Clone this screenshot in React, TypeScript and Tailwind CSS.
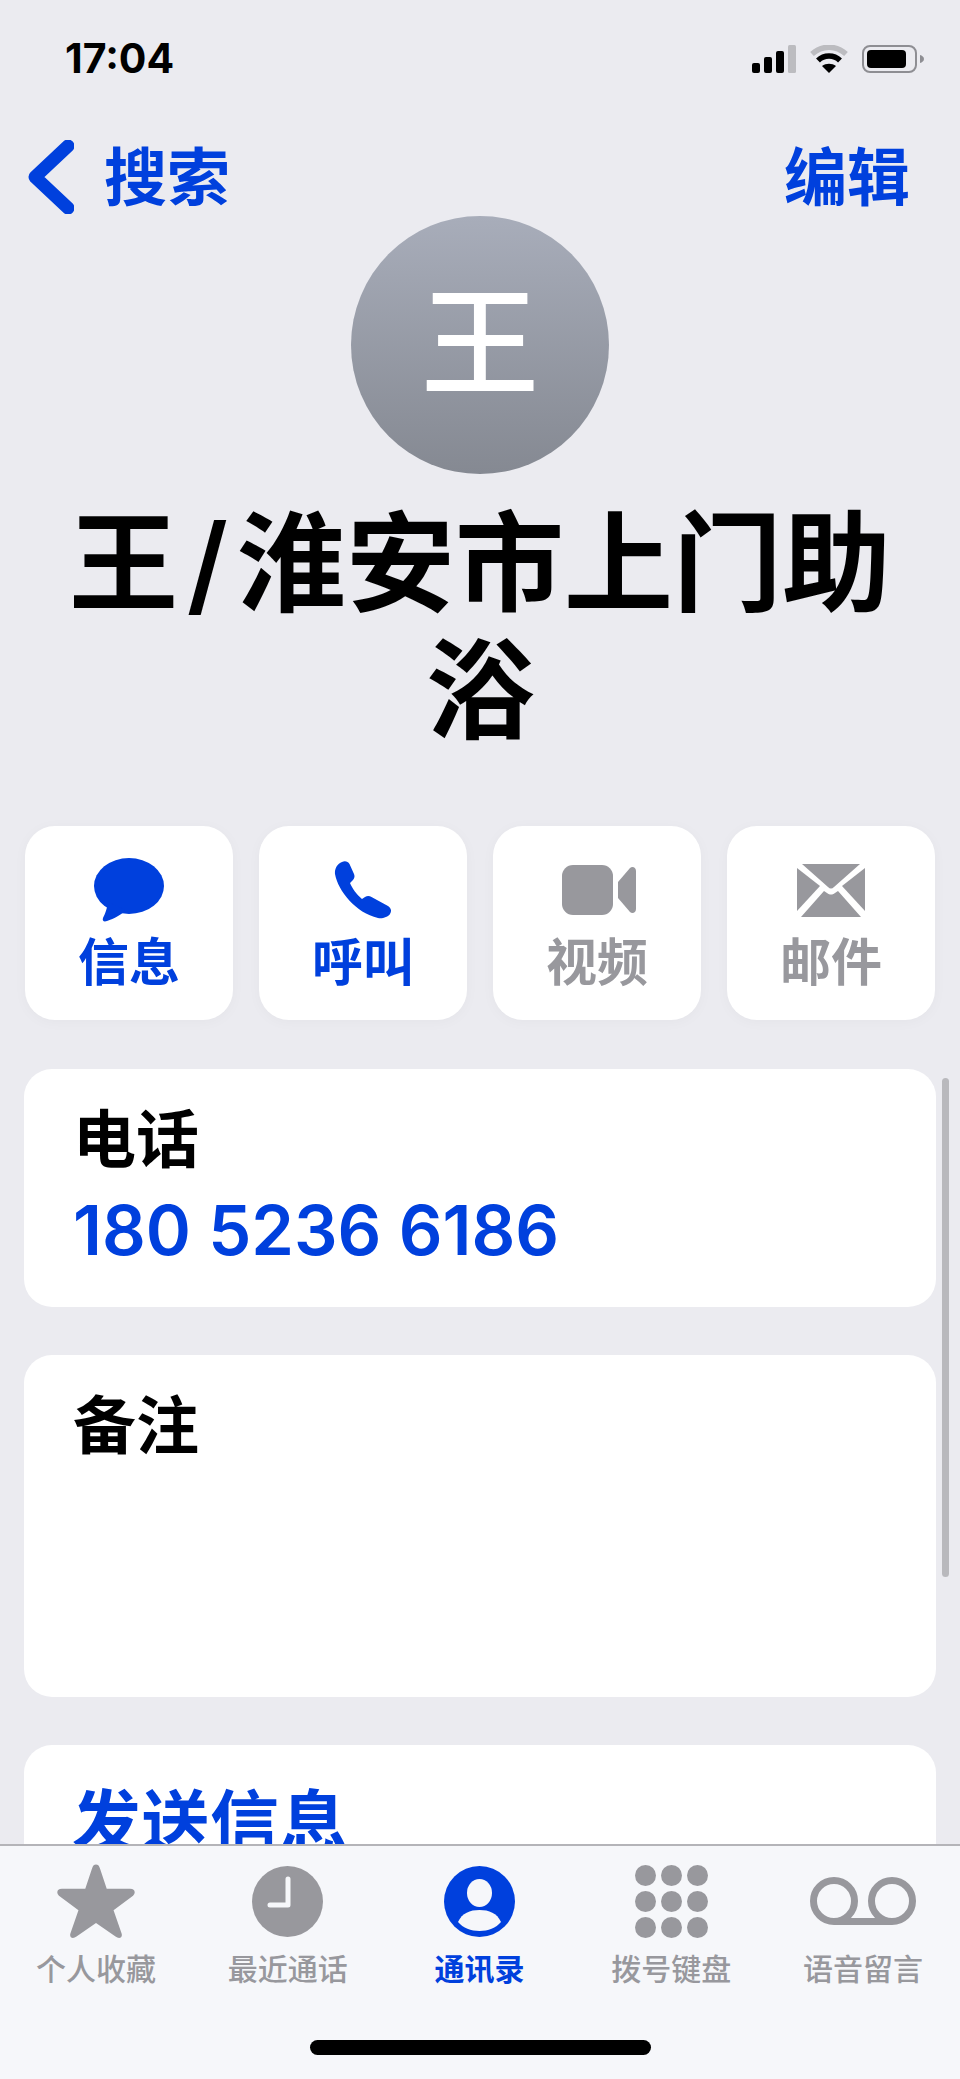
// 通讯录 联系人详情 화면
const BLUE = 'text-[#0040dd]'

const ACTIONS = [
  { label: '信息', active: true, icon: <MessageIcon /> },
  { label: '呼叫', active: true, icon: <PhoneIcon /> },
  { label: '视频', active: false, icon: <VideoIcon /> },
  { label: '邮件', active: false, icon: <MailIcon /> },
]

const TABS = [
  { label: '个人收藏', active: false, icon: <StarIcon /> },
  { label: '最近通话', active: false, icon: <ClockIcon /> },
  { label: '通讯录', active: true, icon: <PersonIcon /> },
  { label: '拨号键盘', active: false, icon: <KeypadIcon /> },
  { label: '语音留言', active: false, icon: <VoicemailIcon /> },
]

function MessageIcon() {
  return (
    <svg width="70" height="64" viewBox="0 0 70 64" fill="#0040dd">
      <ellipse cx="35" cy="28" rx="35" ry="28" />
      <path d="M14 44 C13 52 10 58 9 60 C8 63 10 64 13 63 C20 61 28 56 32 52 Z" />
    </svg>
  )
}

function PhoneIcon() {
  return (
    <svg width="58" height="58" viewBox="0 0 58 58" fill="#0040dd">
      <path d="M8 1 C11 -0.5 14 0.5 15.5 3 L20 13 C21 15.5 20.5 17.5 18.5 19.5 L16 22 C18 27 23 34 28 38 L31 36 C33 34.5 35.5 34.5 37.5 36 L54 45 C57 47 58 50 56 53 C54 56 48 58 44 57 C22 52 4 30 1 13 C0.5 8 3 3 8 1 Z" />
    </svg>
  )
}

function VideoIcon() {
  return (
    <svg className="ml-[3px]" width="74" height="50" viewBox="0 0 74 50" fill="#98989d">
      <rect x="0" y="0" width="51" height="50" rx="11" />
      <path d="M56 17 L68 3 C70 1 74 2 74 6 L74 44 C74 48 70 49 68 47 L56 33 Z" />
    </svg>
  )
}

function MailIcon() {
  return (
    <svg width="68" height="53" viewBox="0 0 68 53" fill="#98989d">
      <path d="M5 0 L63 0 L37 23 C35 25 33 25 31 23 Z" />
      <path d="M0 4 L0 47 L23 22 Z" />
      <path d="M68 4 L68 47 L45 22 Z" />
      <path d="M4 53 L64 53 L41 27 L38 29 C35 31 33 31 30 29 L27 27 Z" />
    </svg>
  )
}

function StarIcon() {
  return (
    <svg width="78" height="75" viewBox="0 0 80 76" fill="#98989d">
      <path d="M40 0 C42 0 43 1 44 4 L51 25 L75 25 C80 25 81 29 78 32 L58 47 L66 70 C68 75 64 77 60 74 L40 60 L20 74 C16 77 12 75 14 70 L22 47 L2 32 C-1 29 0 25 5 25 L29 25 L36 4 C37 1 38 0 40 0 Z" />
    </svg>
  )
}

function ClockIcon() {
  return (
    <svg width="71" height="71" viewBox="0 0 71 71">
      <circle cx="35.5" cy="35.5" r="35.5" fill="#98989d" />
      <path d="M36 13 V39 H18" fill="none" stroke="#f6f7fa" strokeWidth="5" strokeLinecap="round" strokeLinejoin="round" />
    </svg>
  )
}

function PersonIcon() {
  return (
    <svg width="71" height="71" viewBox="0 0 71 71">
      <circle cx="35.5" cy="35.5" r="35.5" fill="#0040dd" />
      <ellipse cx="35.5" cy="27" rx="12.5" ry="14" fill="#f6f7fa" />
      <path d="M14 56 C18 47 26 44 35.5 44 C45 44 53 47 57 56 C52 62 44 65 35.5 65 C27 65 19 62 14 56 Z" fill="#f6f7fa" />
    </svg>
  )
}

function KeypadIcon() {
  const centers = [10.5, 36.5, 62.5]
  return (
    <svg width="73" height="73" viewBox="0 0 73 73" fill="#98989d">
      {centers.map((cy) =>
        centers.map((cx) => <circle key={`${cx}-${cy}`} cx={cx} cy={cy} r="10.5" />),
      )}
    </svg>
  )
}

function VoicemailIcon() {
  return (
    <svg width="106" height="48" viewBox="0 0 106 48" fill="none" stroke="#98989d" strokeWidth="7">
      <circle cx="24" cy="24" r="20.5" />
      <circle cx="82" cy="24" r="20.5" />
      <path d="M24 44.5 H82" />
    </svg>
  )
}

function StatusIcons() {
  return (
    <div className="flex items-center gap-[14px]">
      <svg width="44" height="28" viewBox="0 0 44 28">
        <rect x="0" y="18" width="8" height="10" rx="2" fill="#000" />
        <rect x="12" y="12" width="8" height="16" rx="2" fill="#000" />
        <rect x="24" y="6" width="8" height="22" rx="2" fill="#000" />
        <rect x="36" y="0" width="8" height="28" rx="1.5" fill="#bcbcc0" />
      </svg>
      <svg width="38" height="28" viewBox="0 0 38 28" fill="none">
        <path d="M2 9 C12 0 26 0 36 9" stroke="#bcbcc0" strokeWidth="5.5" />
        <path d="M8 15.5 C14 9.5 24 9.5 30 15.5" stroke="#000" strokeWidth="5.5" />
        <path d="M19 28 L12 21 C16 18 22 18 26 21 Z" fill="#000" />
      </svg>
      <svg width="62" height="28" viewBox="0 0 62 28" fill="none">
        <rect x="1" y="1" width="53" height="26" rx="7" stroke="#8e8e93" strokeWidth="2" />
        <rect x="5" y="5" width="39" height="18" rx="4" fill="#000" />
        <path d="M58 10 C60 10.5 62 12 62 14 C62 16 60 17.5 58 18 Z" fill="#8e8e93" />
      </svg>
    </div>
  )
}

export default function App() {
  return (
    <div className="relative h-[2079px] w-[960px] overflow-hidden bg-[#ebebf0] font-['Inter','Noto_Sans_CJK_SC',sans-serif]">
      {/* 상단 상태바 */}
      <div className="flex h-[116px] items-start justify-between pl-[65px] pr-[36px] pt-[36px]">
        <span className="text-[41px] leading-[44px] font-bold text-black">17:04</span>
        <div className="pt-[9px]">
          <StatusIcons />
        </div>
      </div>

      {/* 네비게이션 */}
      <div className={`flex h-[100px] items-start justify-between pl-[28px] pr-[50px] ${BLUE}`}>
        <div className="flex items-center gap-[30px] pt-[24px]">
          <svg width="46" height="74" viewBox="0 0 46 74" fill="none">
            <path d="M40 6 L7 37 L40 68" stroke="#0040dd" strokeWidth="13" strokeLinecap="round" strokeLinejoin="round" />
          </svg>
          <span className="text-[63px] leading-[74px] font-semibold">搜索</span>
        </div>
        <span className="pt-[24px] text-[63px] leading-[74px] font-semibold">编辑</span>
      </div>

      {/* 아바타, 이름 */}
      <div className="flex flex-col items-center">
        <div className="flex h-[258px] w-[258px] items-center justify-center rounded-full bg-gradient-to-b from-[#a8adba] to-[#858992] pb-[4px] text-[118px] leading-none font-medium text-white">
          王
        </div>
        <h1 className="mt-[26px] w-[860px] text-center text-[109px] leading-[127px] font-semibold text-black [word-spacing:-0.17em]">
          王 / 淮安市上门助浴
        </h1>
      </div>

      {/* 액션 버튼 */}
      <div className="mt-[72px] grid grid-cols-4 gap-[26px] px-[25px]">
        {ACTIONS.map((action) => (
          <div
            key={action.label}
            className="flex h-[194px] flex-col items-center rounded-[30px] bg-white shadow-[0_2px_14px_rgba(0,0,0,0.03)]"
          >
            <div className="flex h-[104px] items-center justify-center pt-[24px]">{action.icon}</div>
            <span
              className={`text-[51px] leading-[66px] font-semibold ${action.active ? BLUE : 'text-[#98989d]'}`}
            >
              {action.label}
            </span>
          </div>
        ))}
      </div>

      {/* 전화 */}
      <div className="mx-[24px] mt-[49px] h-[238px] rounded-[28px] bg-white pl-[49px] pt-[32px]">
        <div className="text-[63px] leading-[76px] font-semibold text-black">电话</div>
        <div className={`mt-[14px] text-[68.5px] leading-[80px] font-semibold ${BLUE}`}>180 5236 6186</div>
      </div>

      {/* 메모 */}
      <div className="mx-[24px] mt-[48px] h-[342px] rounded-[28px] bg-white pl-[49px] pt-[32px]">
        <div className="text-[63px] leading-[76px] font-semibold text-black">备注</div>
      </div>

      {/* 메시지 보내기 */}
      <div className="mx-[24px] mt-[48px] h-[300px] rounded-[28px] bg-white pl-[48px] pt-[36px]">
        <div className={`text-[69px] leading-[84px] font-semibold ${BLUE}`}>发送信息</div>
      </div>

      {/* 스크롤바 */}
      <div className="absolute left-[942px] top-[1078px] h-[499px] w-[7px] rounded-full bg-[#b9b9bd]" />

      {/* 하단 탭바 */}
      <div className="absolute bottom-0 left-0 h-[235px] w-full border-t-2 border-[#b4b4b8] bg-[#f6f7fa]">
        <div className="grid grid-cols-5 pr-[1px] pt-[16px]">
          {TABS.map((tab) => (
            <div key={tab.label} className="flex flex-col items-center">
              <div className="flex h-[78px] items-center justify-center">{tab.icon}</div>
              <span
                className={`mt-[9px] text-[30px] leading-[40px] ${tab.active ? `font-semibold ${BLUE}` : 'font-medium text-[#98989d]'}`}
              >
                {tab.label}
              </span>
            </div>
          ))}
        </div>
        <div className="absolute bottom-[24px] left-[310px] h-[15px] w-[341px] rounded-full bg-black" />
      </div>
    </div>
  )
}
